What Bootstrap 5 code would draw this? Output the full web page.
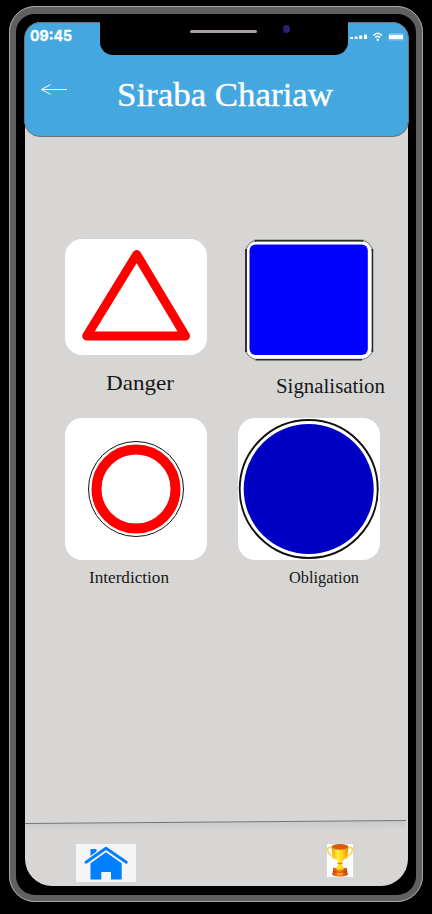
<!DOCTYPE html>
<html lang="fr">
<head>
<meta charset="utf-8">
<meta name="viewport" content="width=device-width, initial-scale=1">
<title>Siraba Chariaw</title>
<link href="https://cdn.jsdelivr.net/npm/bootstrap@5.3.0/dist/css/bootstrap.min.css" rel="stylesheet">
<style>
body{background:#000;width:432px;height:914px;overflow:hidden}
svg{display:block;flex:none;overflow:visible}
.phone{width:414px;height:896px;margin:6px 0 0 9px;background:#000;border:7px solid #606060;border-top-width:8px;border-radius:26px;padding:8px 8px 9px 9px;outline:1px solid #a5a5a5;outline-offset:-1px}
.screen{width:383px;height:864px;background:#d7d6d5;border-radius:16px 16px 27px 27px}
.topbar{width:385px;height:115px;margin-left:-1px;background:#45a7e0;border:1px solid #6d7479;border-radius:16px}
.notch{left:75px;top:-1px;width:248px;height:33px;background:#000;border-radius:0 0 13px 13px}
.speaker{left:90px;top:8px;width:67px;height:3px;border-radius:2px;background:#a99f9f}
.lens{left:183px;top:3px;width:7px;height:8px;border-radius:50%;background:#2b1f78}
.serif{font-family:"Liberation Serif",Georgia,serif}
.clock{font-family:Inter,"Open Sans",sans-serif;font-weight:700}
.signs{padding:102px 0 0 40px;column-gap:31px}
.sign{width:142px}
.tile{width:142px;background:#fff;border-radius:17px;overflow:hidden}
.short{height:116px}
.tall{height:142px}
.square{width:142px;height:121px}
.caption-a{height:63px}
.caption-b{height:58px}
.bottom{height:66px}
.dock{padding:19px 55px 0 51px}
.home{width:60px;height:38px;background:#f5f5f5}
.cup{width:26px;height:33px;background:#fff}
</style>
<script src="https://cdn.jsdelivr.net/npm/bootstrap@5.3.0/dist/js/bootstrap.bundle.min.js"></script>
</head>
<body>
<div class="phone">
<div class="screen d-flex flex-column">
<header class="topbar position-relative">
  <div class="notch position-absolute"><div class="speaker position-absolute"></div><div class="lens position-absolute"></div></div>
  <div class="d-flex justify-content-between">
    <svg class="clock" width="70" height="32"><text x="5" y="18" font-size="15" fill="#fff" stroke="#fff" stroke-width=".3" textLength="42" lengthAdjust="spacingAndGlyphs">09:45</text></svg>
    <svg width="59" height="32" viewBox="349 23 59 32" fill="#fff">
      <path d="M350 37h3v2h-3zM354.600 36.500h3v2.500h-3zM359.200 35.500h3v3.500h-3zM364 34.500h3v4.500h-3z"/>
      <path d="M373.500 35.500q4.200-4.600 8.400 0M375.300 37.600q2.400-2.600 4.800 0" fill="none" stroke="#fff" stroke-width="1.500"/><circle cx="377.700" cy="39.700" r="1.200"/>
      <rect x="388.500" y="33.200" width="15" height="7.300" rx="2" fill="#82c5ec"/><rect x="389" y="35" width="14" height="4" rx=".6"/>
    </svg>
  </div>
  <div class="d-flex align-items-start">
    <svg width="75" height="60"><path d="M42 34.500H16.500M25.500 29.500L16.500 34.500l9 4.800" fill="none" stroke="#fff" stroke-width="1"/></svg>
    <svg class="serif" width="240" height="60"><text x="17" y="51" font-size="33.500" fill="#fff" stroke="#fff" stroke-width=".35" textLength="216" lengthAdjust="spacingAndGlyphs">Siraba Chariaw</text></svg>
  </div>
</header>
<main class="signs d-flex flex-wrap flex-grow-1 align-content-start">
  <section class="sign">
    <div class="tile short"><svg width="142" height="116"><path d="M71.700 15.500L21.700 97H120.500Z" fill="none" stroke="#f00" stroke-width="9" stroke-linejoin="round"/></svg></div>
    <svg class="serif caption-a" width="142"><text x="41" y="35" font-size="21.500" fill="#161616" textLength="68" lengthAdjust="spacingAndGlyphs">Danger</text></svg>
  </section>
  <section class="sign">
    <svg class="square" viewBox="238 239 142 121"><path d="M254.500 240.700h109M255.500 359.500h106.500M246 249v103M372.300 249v103" stroke="#292c29" stroke-width="1.900"/><path d="M254.500 240.500Q249 242 246 249M363.500 240.500Q369.500 242 372.500 249M246 352Q249 358 255.500 359.500M372.500 352Q369 358 362 359.500" fill="none" stroke="#777" stroke-width="1"/><rect x="247" y="241.700" width="124.500" height="117" rx="10" fill="#fff"/><rect x="249.500" y="244.500" width="118.300" height="110.500" rx="6" fill="#00f"/></svg>
    <svg class="serif" width="142" height="58"><text x="38" y="33" font-size="20" fill="#161616" textLength="109" lengthAdjust="spacingAndGlyphs">Signalisation</text></svg>
  </section>
  <section class="sign">
    <div class="tile tall"><svg width="142" height="142"><circle cx="71" cy="71" r="47.500" fill="none" stroke="#111" stroke-width="1"/><circle cx="71" cy="71" r="39.500" fill="none" stroke="#f00" stroke-width="10"/></svg></div>
    <svg class="serif caption-b" width="142"><text x="24" y="23" font-size="15.800" fill="#161616" textLength="80" lengthAdjust="spacingAndGlyphs">Interdiction</text></svg>
  </section>
  <section class="sign">
    <div class="tile tall"><svg width="142" height="142"><circle cx="70.700" cy="71" r="69" fill="none" stroke="#111" stroke-width="1.900"/><circle cx="70.700" cy="71" r="65" fill="#0000c4"/></svg></div>
    <svg class="serif caption-b" width="142"><text x="51" y="23" font-size="15.800" fill="#161616" textLength="70" lengthAdjust="spacingAndGlyphs">Obligation</text></svg>
  </section>
</main>
<footer class="bottom">
  <svg width="383" height="5"><defs><linearGradient id="shade" x1="0" x2="0" y1="0" y2="1"><stop stop-color="#cbcaca"/><stop offset="1" stop-color="#d7d6d5"/></linearGradient></defs><path d="M0 4L381 1V8L0 11Z" fill="url(#shade)"/><path d="M0 3.500L381 .5" stroke="#747474" stroke-width="1.100"/></svg>
  <nav class="dock d-flex justify-content-between align-items-start">
    <div class="home"><svg width="60" height="38" viewBox="76 844 60 38"><g fill="#0080ff"><path d="M90.500 849h6v2.500l-6 4.500z"/><path d="M106 852.300l15.700 11V879.500H111v-7.500h-9.700v7.500H90.500v-16.200z"/></g><path d="M86 862.200L106 848.300l20.300 13.900" fill="none" stroke="#0080ff" stroke-width="2.900" stroke-linecap="round" stroke-linejoin="round"/><path d="M89.500 862.800L106 851.200l17 11.600" fill="none" stroke="#f5f5f5" stroke-width="1"/></svg></div>
    <div class="cup"><svg width="26" height="33"><defs>
      <linearGradient id="gold"><stop stop-color="#f0a010"/><stop offset=".35" stop-color="#fff03a"/><stop offset=".65" stop-color="#ffd21c"/><stop offset="1" stop-color="#f09000"/></linearGradient>
      <linearGradient id="wood"><stop stop-color="#d43c08"/><stop offset=".45" stop-color="#ff8a1c"/><stop offset="1" stop-color="#c93508"/></linearGradient></defs>
      <path d="M6 4C0 2 0 5 1.200 8C2.500 11.500 7 11 6.500 15M20 4C26 2 26 5 24.800 8C23.500 11.500 19 11 19.500 15" fill="none" stroke="#ffd83c" stroke-width="1.700"/>
      <path d="M5 3H21C21.500 10 20 14 15.500 16.800L14.500 20L17 25H9L11.500 20L10.500 16.800C6 14 4.500 10 5 3Z" fill="url(#gold)"/>
      <ellipse cx="13" cy="2.800" rx="8.400" ry="2.900" fill="#d85c08"/><path d="M10.500 19.500h5" stroke="#e87a08" stroke-width="1.500"/>
      <path d="M6.500 23.500Q13 26 19.500 23.500L20.800 31Q13 34.500 5.200 31Z" fill="url(#wood)"/><path d="M9.500 22.500h7v2.700q-3.500 1.200-7 0z" fill="#ffd820"/><path d="M10 28h6v2.500h-6z" fill="#ffad30"/><path d="M6 27.500Q13 29.500 20 27.500" fill="none" stroke="#c33a08" stroke-width=".8"/>
    </svg></div>
  </nav>
</footer>
</div>
</div>
</body>
</html>
